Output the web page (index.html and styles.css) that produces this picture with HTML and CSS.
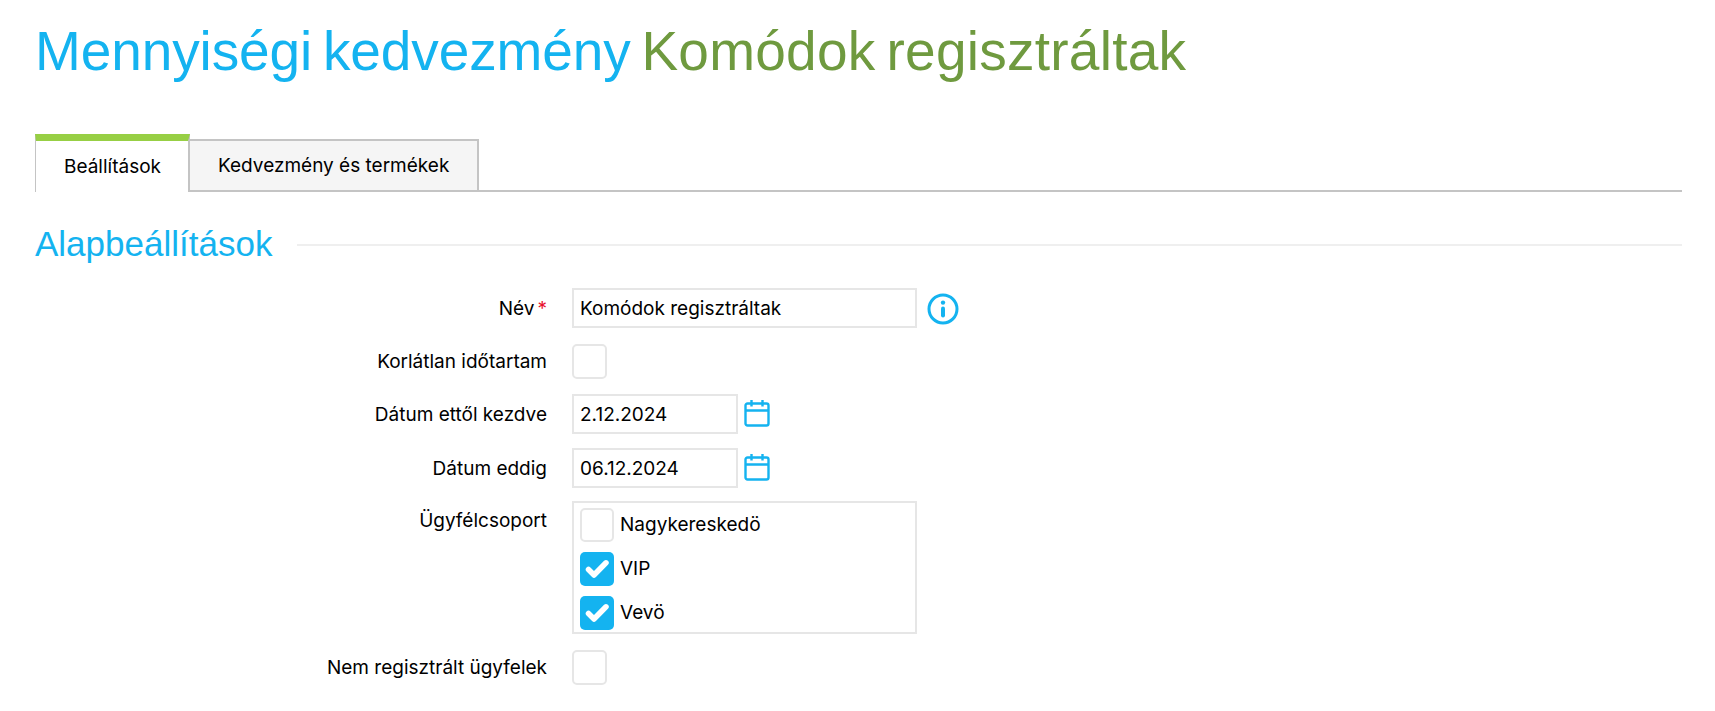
FILE: index.html
```html
<!DOCTYPE html>
<html lang="hu">
<head>
<meta charset="utf-8">
<title>Mennyiségi kedvezmény</title>
<link rel="stylesheet" href="styles.css">
</head>
<body>
<main class="page">
  <h1 class="title"><span class="title-main">Mennyiségi kedvezmény</span> <span class="title-sub">Komódok regisztráltak</span></h1>
  <nav class="tabs">
    <a class="tab tab-active">Beállítások</a>
    <a class="tab">Kedvezmény és termékek</a>
  </nav>
  <div class="section-head">
    <h2 class="section-title">Alapbeállítások</h2>
    <span class="section-rule"></span>
  </div>
  <form class="form">
    <label class="label label-input">Név<span class="req">*</span></label>
    <div class="field">
      <div class="input input-wide">Komódok regisztráltak</div>
      <svg class="icon-info" viewBox="0 0 32 32" width="32" height="32" aria-hidden="true">
        <circle cx="16" cy="16" r="14" fill="none" stroke="#14b3f0" stroke-width="3"/>
        <circle cx="16" cy="9.6" r="2.2" fill="#14b3f0"/>
        <rect x="14" y="13.5" width="4" height="11" rx="2" fill="#14b3f0"/>
      </svg>
    </div>

    <label class="label label-check">Korlátlan időtartam</label>
    <div class="field field-check"><span class="check check-solo"></span></div>

    <label class="label label-input">Dátum ettől kezdve</label>
    <div class="field">
      <div class="input input-date">2.12.2024</div>
      <svg class="icon-cal" viewBox="0 0 26 28" width="26" height="28" aria-hidden="true">
        <path d="M3.5 4.5h19a2 2 0 0 1 2 2v18a2 2 0 0 1-2 2h-19a2 2 0 0 1-2-2v-18a2 2 0 0 1 2-2zM1.5 11.5h23M7.5 1v6.5M18.5 1v6.5" fill="none" stroke="#14b3f0" stroke-width="2.4"/>
      </svg>
    </div>

    <label class="label label-input">Dátum eddig</label>
    <div class="field">
      <div class="input input-date">06.12.2024</div>
      <svg class="icon-cal" viewBox="0 0 26 28" width="26" height="28" aria-hidden="true">
        <path d="M3.5 4.5h19a2 2 0 0 1 2 2v18a2 2 0 0 1-2 2h-19a2 2 0 0 1-2-2v-18a2 2 0 0 1 2-2zM1.5 11.5h23M7.5 1v6.5M18.5 1v6.5" fill="none" stroke="#14b3f0" stroke-width="2.4"/>
      </svg>
    </div>

    <label class="label label-group">Ügyfélcsoport</label>
    <div class="group">
      <div class="group-item"><span class="check"></span><span class="group-text">Nagykereskedö</span></div>
      <div class="group-item"><span class="check check-on"><svg viewBox="0 0 34 34" width="34" height="34" aria-hidden="true"><path d="M8.5 17.5l5.5 5.5L26 10.8" fill="none" stroke="#fff" stroke-width="5.5" stroke-linecap="round" stroke-linejoin="round"/></svg></span><span class="group-text">VIP</span></div>
      <div class="group-item"><span class="check check-on"><svg viewBox="0 0 34 34" width="34" height="34" aria-hidden="true"><path d="M8.5 17.5l5.5 5.5L26 10.8" fill="none" stroke="#fff" stroke-width="5.5" stroke-linecap="round" stroke-linejoin="round"/></svg></span><span class="group-text">Vevö</span></div>
    </div>

    <label class="label label-check">Nem regisztrált ügyfelek</label>
    <div class="field field-check"><span class="check check-solo"></span></div>
  </form>
</main>
</body>
</html>
```
FILE: styles.css
```css
* { box-sizing: border-box; }
html, body { margin: 0; padding: 0; background: #fff; }
body { font-family: Inter, "Liberation Sans", sans-serif; font-size: 19px; color: #000; }
.page { padding: 21px 33px 0 35px; height: 711px; overflow: hidden; }
.title { margin: 0; font: 400 55px/60px "Liberation Sans", Arial, sans-serif; word-spacing: -4.5px; white-space: nowrap; }
.title-main { color: #14b3f0; letter-spacing: -0.1px; }
.title-sub { color: #6f9a3f; letter-spacing: 0.25px; }
.tabs { display: flex; align-items: flex-end; height: 58px; margin-top: 53px; border-bottom: 2px solid #c4c4c4; }
.tab { display: flex; align-items: center; justify-content: center; height: 53px; margin-bottom: -2px; padding: 0 28px; background: #f5f5f5; border: 2px solid #c4c4c4; border-left-width: 0; font-size: 19px; }
.tab-active { width: 155px; height: 58px; padding: 0 0 0 1px; background: #fff; border-width: 7px 2px 0 1px; border-color: #97cf44 #c4c4c4 #fff #c4c4c4; }
.section-head { display: flex; align-items: center; gap: 25px; margin-top: 32px; height: 42px; }
.section-title { margin: 0; padding-bottom: 2px; font: 400 35px/40px "Liberation Sans", Arial, sans-serif; color: #14b3f0; white-space: nowrap; }
.section-rule { flex: 1; height: 2px; background: #efefef; }
.form { display: grid; grid-template-columns: 512px 1fr; column-gap: 25px; row-gap: 14px; margin-top: 22px; }
.label { text-align: right; font-size: 19px; white-space: nowrap; }
.label-input { height: 40px; line-height: 42px; }
.label-check { height: 36px; line-height: 40px; }
.label-group { height: 34px; line-height: 38px; }
.req { color: #e8112d; margin-left: 3px; }
.field { display: flex; align-items: center; gap: 10px; }
.field-check { padding: 2px 0 1px; }
.input { height: 40px; line-height: 38px; padding: 0 6px; border: 2px solid #e6e6e6; background: #fff; font-size: 19px; }
.input-wide { width: 345px; }
.input-date { width: 166px; }
.icon-info { margin-top: 2px; }
.icon-cal { margin-left: -4px; margin-top: -2px; }
.check { display: inline-flex; align-items: center; justify-content: center; flex: none; width: 34px; height: 34px; border: 2px solid #e6e6e6; border-radius: 5px; background: #fff; }
.check-solo { width: 35px; height: 35px; }
.check-on { background: #14b3f0; border: 0; }
.group { display: flex; flex-direction: column; gap: 10px; width: 345px; height: 133px; margin-top: -1px; padding: 5px 6px 2px; border: 2px solid #e6e6e6; }
.group-item { display: flex; align-items: flex-start; gap: 6px; }
.group-text { line-height: 34px; font-size: 19px; }
```
